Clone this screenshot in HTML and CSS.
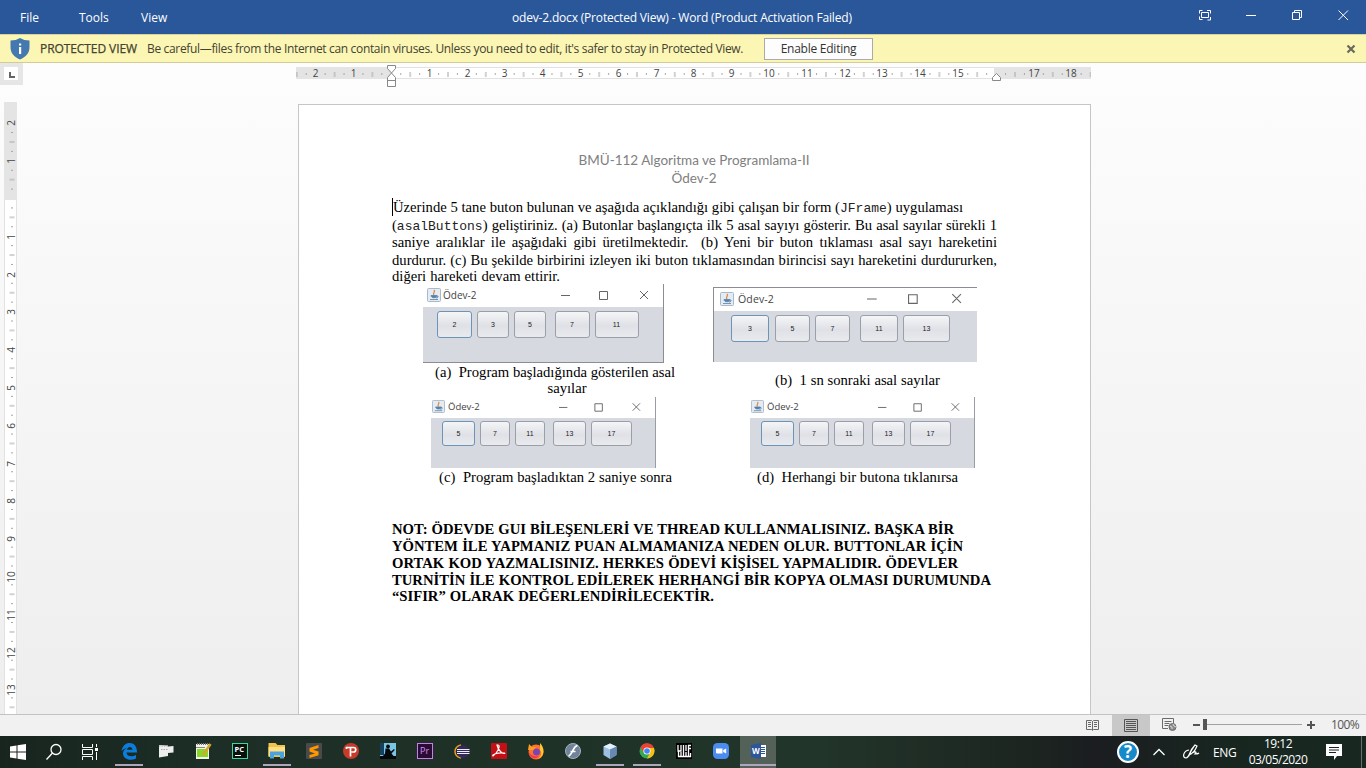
FILE: index.html
```html
<!DOCTYPE html>
<html lang="tr">
<head>
<meta charset="utf-8">
<title>odev-2.docx - Word</title>
<link rel="stylesheet" href="styles.css">
</head>
<body>
<header class="titlebar">
  <nav class="menu"><span class="m-file">File</span><span class="m-tools">Tools</span><span class="m-view">View</span></nav>
  <div class="title">odev-2.docx (Protected View) - Word (Product Activation Failed)</div>
  <svg class="winctl" width="160" height="34" fill="none" stroke="#fff">
    <path d="M3.500 13.500v-3h3M11 10.500h3.500v3M14.500 17v3h-3M6.500 19.500h-3v-3M5.500 12.500h7v5h-7z"/>
    <path d="M50 15.500h10M96.500 12.500h7v7h-7zM98.500 12v-1.500h7v7h-1.500M142.500 10.500l9.500 9.500M152 10.500l-9.500 9.500"/>
  </svg>
</header>
<section class="protect">
  <svg class="shield" width="20" height="22" viewBox="0 0 20 22"><path d="M10 0Q14 2.500 19.500 2.500V9C19.500 15 16 19 10 21.500C4 19 .5 15 .5 9V2.500Q6 2.500 10 0Z" fill="#4478b0"/><path d="M9 9h2.200v7H9zM9 5.500h2.200v2H9z" fill="#fff"/></svg>
  <span class="pv">PROTECTED VIEW</span>
  <span class="careful">Be careful—files from the Internet can contain viruses. Unless you need to edit, it's safer to stay in Protected View.</span>
  <span class="enable">Enable Editing</span>
  <svg class="dismiss" width="10" height="10" viewBox="0 0 10 10"><path d="M1.500 1.500l7 7M8.500 1.500l-7 7" stroke="#6b685c" stroke-width="2.200"/></svg>
</section>
<main class="work">
  <aside class="side">
    <div class="tabstop"><svg width="14" height="13"><rect width="14" height="13" fill="#fff"/><path d="M6 5v5h5" fill="none" stroke="#666" stroke-width="2"/></svg></div>
    <svg class="vruler" width="14" height="613">
      <defs><pattern id="vt" patternUnits="userSpaceOnUse" x="0" y="96.500" width="14" height="37.690"><path d="M7 9.400h2M7 28.200h2M5.500 18.850h5" stroke="#a5a5a5"/></pattern></defs>
      <rect width="13" height="613" fill="#fff"/><path d="M.5 0v613M12.500 0v613" stroke="#e2e2e2"/><rect width="13" height="98" fill="#e4e4e4"/>
      <rect y="25" width="14" height="588" fill="url(#vt)"/>
      <g class="rnum">
        <text transform="translate(11 21) rotate(-90)">2</text><text transform="translate(11 59) rotate(-90)">1</text>
        <text transform="translate(11 135) rotate(-90)">1</text><text transform="translate(11 173) rotate(-90)">2</text><text transform="translate(11 210) rotate(-90)">3</text><text transform="translate(11 248) rotate(-90)">4</text><text transform="translate(11 286) rotate(-90)">5</text><text transform="translate(11 324) rotate(-90)">6</text><text transform="translate(11 362) rotate(-90)">7</text><text transform="translate(11 399) rotate(-90)">8</text><text transform="translate(11 437) rotate(-90)">9</text><text transform="translate(11 475) rotate(-90)">10</text><text transform="translate(11 513) rotate(-90)">11</text><text transform="translate(11 551) rotate(-90)">12</text><text transform="translate(11 588) rotate(-90)">13</text>
      </g>
    </svg>
  </aside>
  <div class="column">
    <svg class="hruler" width="796" height="26">
      <defs><pattern id="ht" patternUnits="userSpaceOnUse" x="95.300" y="0" width="37.800" height="26"><path d="M9.500 10v2M28.300 10v2M18.900 9v5" stroke="#a5a5a5"/></pattern></defs>
      <rect y="4" width="795" height="12" fill="#e4e4e4"/><rect x="95" y="4" width="603" height="12" fill="#fff"/><path d="M95 4.500h603M95 15.500h603" stroke="#e2e2e2"/>
      <rect width="795" height="26" fill="url(#ht)"/>
      <g class="rnum"><text x="19.500" y="14">2</text><text x="57.500" y="14">1</text><text x="133.500" y="14">1</text><text x="171.500" y="14">2</text><text x="208.500" y="14">3</text><text x="246.500" y="14">4</text><text x="284.500" y="14">5</text><text x="322.500" y="14">6</text><text x="360.500" y="14">7</text><text x="397.500" y="14">8</text><text x="435.500" y="14">9</text><text x="473" y="14">10</text><text x="511" y="14">11</text><text x="549" y="14">12</text><text x="586" y="14">13</text><text x="624" y="14">14</text><text x="662" y="14">15</text><text x="738" y="14">17</text><text x="775" y="14">18</text></g>
      <path d="M91.500 2.500h8v3l-4 4.500l4 4.500v9h-8v-9l4-4.500l-4-4.500zM91.500 17.500h8" fill="#fff" stroke="#888"/>
      <path d="M696.500 17.500v-3l4-4l4 4v3z" fill="#fff" stroke="#888"/>
    </svg>
    <article class="page">
      <div class="head"><div>BMÜ-112 Algoritma ve Programlama-II</div><div>Ödev-2</div></div>
      <div class="para">
        <div class="ln l1">Üzerinde 5 tane buton bulunan ve aşağıda açıklandığı gibi çalışan bir form (<code>JFrame</code>) uygulaması</div>
        <div class="ln l2">(<code>asalButtons</code>) geliştiriniz. (a) Butonlar başlangıçta ilk 5 asal sayıyı gösterir. Bu asal sayılar sürekli 1</div>
        <div class="ln">saniye aralıklar ile aşağıdaki gibi üretilmektedir. &nbsp;(b) Yeni bir buton tıklaması asal sayı hareketini</div>
        <div class="ln l4">durdurur. (c) Bu şekilde birbirini izleyen iki buton tıklamasından birincisi sayı hareketini durdururken,</div>
        <div class="ln l5">diğeri hareketi devam ettirir.</div>
      </div>
      <div class="figs">
        <div class="cell c1">
          <div class="jwin wa"><div class="jt"><svg class="java" viewBox="0 0 14 14"><use href="#cup"/></svg><span>Ödev-2</span><svg class="jc" viewBox="0 0 88 10"><use href="#jctl"/></svg></div><div class="jb"><b>2</b><b>3</b><b>5</b><b>7</b><b>11</b></div></div>
          <div class="cap capa"><div class="w240">(a)&nbsp; Program başladığında gösterilen asal</div><div class="second">sayılar</div></div>
        </div>
        <div class="cell c2">
          <div class="jwin wb"><div class="jt"><svg class="java" viewBox="0 0 14 14"><use href="#cup"/></svg><span>Ödev-2</span><svg class="jc" viewBox="0 0 88 10"><use href="#jctl"/></svg></div><div class="jb"><b>3</b><b>5</b><b>7</b><b>11</b><b>13</b></div></div>
          <div class="cap capb">(b)&nbsp; 1 sn sonraki asal sayılar</div>
        </div>
        <div class="cell c3">
          <div class="jwin wc"><div class="jt"><svg class="java" viewBox="0 0 14 14"><use href="#cup"/></svg><span>Ödev-2</span><svg class="jc" viewBox="0 0 88 10"><use href="#jctl"/></svg></div><div class="jb"><b>5</b><b>7</b><b>11</b><b>13</b><b>17</b></div></div>
          <div class="cap capc">(c)&nbsp; Program başladıktan 2 saniye sonra</div>
        </div>
        <div class="cell c4">
          <div class="jwin wc"><div class="jt"><svg class="java" viewBox="0 0 14 14"><use href="#cup"/></svg><span>Ödev-2</span><svg class="jc" viewBox="0 0 88 10"><use href="#jctl"/></svg></div><div class="jb"><b>5</b><b>7</b><b>11</b><b>13</b><b>17</b></div></div>
          <div class="cap capd">(d)&nbsp; Herhangi bir butona tıklanırsa</div>
        </div>
      </div>
      <div class="note">
        <div class="n1">NOT: ÖDEVDE GUI BİLEŞENLERİ VE THREAD KULLANMALISINIZ. BAŞKA BİR</div>
        <div class="n2">YÖNTEM İLE YAPMANIZ PUAN ALMAMANIZA NEDEN OLUR. BUTTONLAR İÇİN</div>
        <div class="n3">ORTAK KOD YAZMALISINIZ. HERKES ÖDEVİ KİŞİSEL YAPMALIDIR. ÖDEVLER</div>
        <div class="n4">TURNİTİN İLE KONTROL EDİLEREK HERHANGİ BİR KOPYA OLMASI DURUMUNDA</div>
        <div class="n5">“SIFIR” OLARAK DEĞERLENDİRİLECEKTİR.</div>
      </div>
    </article>
  </div>
</main>
<footer class="status">
  <svg class="v1" width="14" height="12" fill="none" stroke="#6a6a6a"><path d="M.5 1.500h5l1 1l1-1h5v9h-5l-1 1l-1-1h-5zM6.500 2v9M2 3.500h3M2 5.500h3M2 7.500h3M8 3.500h3M8 5.500h3M8 7.500h3"/></svg>
  <div class="v2"><svg width="14" height="13" fill="none" stroke="#555"><path d="M.5.500h13v12H.5zM2 2.500h10M2 4.500h10M2 6.500h10M2 8.500h10M2 10.500h10"/></svg></div>
  <svg class="v3" width="16" height="14" fill="none" stroke="#6a6a6a"><path d="M6 10.500H.5V.500h11v5M2.500 3.500h7M2.500 5.500h5M2.500 7.500h4"/><circle cx="10.500" cy="9" r="3.500" fill="#888"/><path d="M8 8l2 1v2M11 6l1 2l2 1" stroke="#ddd"/></svg>
  <svg class="zoom" width="124" height="14"><path d="M0 7h7M114 7h8M118 3v8" stroke="#555" stroke-width="2"/><path d="M12 6.500h97" stroke="#a0a0a0"/><rect x="10" y="1" width="4" height="11" fill="#555"/></svg>
  <span class="pct">100%</span>
</footer>
<footer class="taskbar">
  <div class="sys"><svg width="18" height="18" viewBox="0 0 18 18" fill="#fff"><path d="M1 3.500l6.500-1v6H1zM8.500 2.300L17 1v7.500H8.500zM1 9.500h6.500v6L1 14.600zM8.500 9.500H17V17l-8.500-1.300z"/></svg></div>
  <div class="sys"><svg width="18" height="18" fill="none" stroke="#fff" stroke-width="1.300"><circle cx="11" cy="6.500" r="5"/><path d="M7.500 10L1.500 16.500"/></svg></div>
  <div class="sys"><svg width="18" height="18" fill="none" stroke="#fff"><path d="M1.500 1v3.500h10V1M1.500 6.500h10v5h-10zM1.500 17v-3.500h10V17M15.500 1v3M15.500 9v8"/><path d="M14 5h3v3h-3z" fill="#fff" stroke="none"/></svg></div>
  <div class="apps">
    <div class="app on"><svg viewBox="0 0 20 20"><path d="M2.500 10C3.500 4.500 7 2 10.500 2C15 2 18 5 18 11.500H7.500C7.800 15.500 13 16.500 17 14v3.500C11 20.500 4 18 4 12.500C4 10 5.500 8 8 7C5.500 7.300 4 8.500 2.500 10ZM8 8.800h5.500C13.300 5 8.500 5 8 8.800Z" fill="#0d7ddc"/></svg></div>
    <div class="app"><svg viewBox="0 0 20 20"><path d="M3 4l9 .5v1l5.500-.5v6.500l-5.500 .5v3L3 16.500z" fill="#eee"/><path d="M3 5h9M5 8.500h7" stroke="#aaa" stroke-dasharray="1.500 1"/></svg></div>
    <div class="app"><svg viewBox="0 0 20 20"><path d="M3 3h13v15H3z" fill="#f1f4e8"/><path d="M4 8h11v8H4z" fill="#8ad52a"/><path d="M4 3h11" stroke="#777" stroke-width="2" stroke-dasharray="1 1"/><path d="M17.500 3L10 14" stroke="#d9a62d" stroke-width="2.500"/><path d="M3 6.500h9" stroke="#888"/></svg></div>
    <div class="app"><svg viewBox="0 0 20 20"><rect x="2.500" y="2.500" width="15" height="15" fill="#07120e" stroke="#43d69b"/><text x="4.500" y="11" class="pc">PC</text><path d="M5 14.500h6" stroke="#fff"/></svg></div>
    <div class="app on"><svg viewBox="0 0 20 20"><path d="M1.500 2h7l2 2H18v12H1.500z" fill="#f3c24c"/><path d="M1.500 6H18v9H1.500z" fill="#ffdf83"/><path d="M3 17.500V10.500h14v7h-4v-3H7v3z" fill="#4ca3dc"/></svg></div>
    <div class="app"><svg viewBox="0 0 20 20"><rect x="2" y="2" width="16" height="16" rx="1" fill="#4a4a4a"/><path d="M14.500 4v3L9 8.800l5.500 1.700v3.700L5.500 17v-3l5.500-1.600l-5.500-1.800V7z" fill="#ff9800"/></svg></div>
    <div class="app"><svg viewBox="0 0 20 20"><circle cx="10" cy="10" r="8" fill="#c83b2b"/><path d="M5.500 8V6.500h7c3 0 3 4.500 0 4.500H10.500M9.500 6.500V15.500" fill="none" stroke="#fff" stroke-width="1.700"/></svg></div>
    <div class="app"><svg viewBox="0 0 20 20"><rect x="2" y="2" width="16" height="16" fill="#7cc4e4"/><path d="M2 2h4v12H2z" fill="#14425e"/><path d="M2 15h16v3H2z" fill="#05090c"/><circle cx="10" cy="5.500" r="1.900" fill="#05090c"/><path d="M7.500 7.500h3.500l2 3l3-2.500l.8 1l-3.300 3.500l2.500 3H4.500l2.500-3z" fill="#05090c"/></svg></div>
    <div class="app"><svg viewBox="0 0 20 20"><rect x="2.500" y="2.500" width="15" height="15" fill="#2b0b36" stroke="#c77dea"/><text x="5" y="13" class="pr">Pr</text></svg></div>
    <div class="app"><svg viewBox="0 0 20 20"><path d="M9 4C1 6 1 15 9 17" fill="none" stroke="#e99a2e" stroke-width="1.500"/><circle cx="11" cy="10.500" r="6.300" fill="#33285f"/><path d="M5 8.500h12.500M5 10.500h12.500M5 12.500h12.500" stroke="#eee"/></svg></div>
    <div class="app"><svg viewBox="0 0 20 20"><rect x="2" y="2" width="16" height="16" rx="1" fill="#c40f14"/><path d="M9 4c3 0-.5 8-5 11c-1.500-1 4-4 11.500-3c2 1-5 1.500-7.500-8z" fill="none" stroke="#fff" stroke-width="1.200"/></svg></div>
    <div class="app"><svg viewBox="0 0 20 20"><circle cx="10" cy="11" r="7.500" fill="#ff7327"/><path d="M14 2c5 5 5 13-2 16c4-3 4-7 2-9z" fill="#ffc832"/><path d="M2 9l1-6l3 3h4L8 9z" fill="#ff9a24"/><circle cx="10.500" cy="11" r="3.500" fill="#7944b8"/><path d="M3 11c2 4 6 5 10 4c-4 5-10 1-10-4z" fill="#fd3151"/></svg></div>
    <div class="app"><svg viewBox="0 0 20 20"><circle cx="10" cy="10" r="7.500" fill="#70839a" stroke="#a5b0bd"/><path d="M14.500 5c-4-1-5 9-9 10M7.500 10.500h5" fill="none" stroke="#fff" stroke-width="1.700"/></svg></div>
    <div class="app on"><svg viewBox="0 0 20 20"><path d="M10 2.500l6.500 3v8.500L10 18l-6.500-4V5.500z" fill="#9dbfe0"/><path d="M10 2.500l6.500 3L10 8.500l-6.500-3z" fill="#e4f0fa"/><path d="M10 8.500l6.500-3V14L10 18z" fill="#658ab4"/></svg></div>
    <div class="app on"><svg viewBox="0 0 20 20"><circle cx="10" cy="10" r="7.500" fill="#35a854"/><path d="M3.500 6.200A7.500 7.500 0 0 1 17 7H10L7 12z" fill="#e94335"/><path d="M10 17.500L13.500 11L11 7h6C19 12 15 17.500 10 17.500z" fill="#fbbf12"/><circle cx="10" cy="10" r="3.600" fill="#fff"/><circle cx="10" cy="10" r="2.800" fill="#4285f4"/></svg></div>
    <div class="app"><svg viewBox="0 0 20 20"><path d="M2 2h16v16H2z" fill="#000"/><path d="M4 4v6h3V4M9.500 10V4M12 4v6M14 4.500h3M14 7.500h3M14.500 4v6M4.500 10v6M7 11v5M9.500 10v6M12 11v5M14.500 10v6M16.500 12v4M4 15.500h13" fill="none" stroke="#fff" stroke-width="1.300"/></svg></div>
    <div class="app"><svg viewBox="0 0 20 20"><rect x="2" y="2" width="16" height="16" rx="4.500" fill="#4a8cf0"/><path d="M5 7.500h6.500v5H6q-1 0-1-1zM12.200 9l3-1.500v5l-3-1.500z" fill="#fff"/></svg></div>
    <div class="app on word"><svg viewBox="0 0 20 20"><path d="M10 4h7v12h-7z" fill="#fff"/><path d="M12 6.500h4M12 8.500h4M12 10.500h4M12 12.500h4" stroke="#2b579a"/><path d="M2 4l10-2v16L2 16z" fill="#2b579a"/><text x="3" y="13" class="wd">W</text></svg></div>
  </div>
  <svg class="help" width="22" height="22" viewBox="0 0 22 22"><circle cx="11" cy="11" r="10" fill="#1689ca" stroke="#fff" stroke-width="2"/><text x="11" y="17" class="q">?</text></svg>
  <svg class="chev" width="14" height="8" fill="none" stroke="#fff" stroke-width="1.300"><path d="M1.500 7l5.500-5.500L12.500 7"/></svg>
  <svg class="pen" width="18" height="16" fill="none" stroke="#fff" stroke-width="1.200"><path d="M7 6C1 7 0 14 4 14c4 0 2-6 9-13l2 1c-2 5-5 8-8 9M13 1c-3 4-5 8-6 11M10 9c4-2 5-1 3 1c2 0 3 0 4-1"/></svg>
  <span class="eng">ENG</span>
  <div class="clock"><div>19:12</div><div class="date">03/05/2020</div></div>
  <svg class="notif" width="18" height="18"><path d="M1 1h16v12h-5l-3 4v-4H1z" fill="#fff"/><path d="M4 4.500h10M4 7h10M4 9.500h7" stroke="#17241e"/></svg>
  <div class="peek"></div>
</footer>
<svg width="0" height="0" class="defs"><defs>
  <g id="cup"><rect x=".5" y=".5" width="13" height="13" rx="1" fill="#e4ebf2" stroke="#a9b9c9"/><path d="M7 2c2 2-2 3 0 5" fill="none" stroke="#e0873a" stroke-width="1.300"/><path d="M4 7.500h6c0 3-6 3-6 0zM3 11.500h8" fill="#5580a8" stroke="#5580a8" stroke-width=".8"/><path d="M10 8c2 0 1 2-1 2" fill="none" stroke="#5580a8"/></g>
  <g id="jctl" fill="none" stroke="#666"><path d="M0 5.500h9M38.500 1.500h8v8h-8zM79 1l8 8M87 1l-8 8"/></g>
</defs></svg>
</body>
</html>
```
FILE: styles.css
```css
* { box-sizing: border-box; }
body { margin: 0; width: 1366px; height: 768px; overflow: hidden; display: flex; flex-direction: column; background: #fff; font-family: "Open Sans", "Noto Sans", sans-serif; font-size: 12px; }
svg { display: block; flex: none; }
.defs { position: absolute; }
span, .title { white-space: nowrap; }

.titlebar { height: 34px; flex: none; background: #2a579a; color: #fff; display: grid; grid-template-columns: 512px 1fr 170px; line-height: 35px; }
.menu { display: flex; padding-left: 20px; }
.m-file { width: 59px; }
.m-tools { width: 62px; }
.title { font-size: 12px; letter-spacing: -.18px; }
.protect { height: 29px; flex: none; background: #fcf6b5; border-top: 1px solid #d8d2a0; border-bottom: 1px solid #d2cc98; color: #444230; display: flex; align-items: center; padding-left: 10px; }
.shield { margin-right: 10px; }
.pv { width: 107px; letter-spacing: -.08px; -webkit-text-stroke: .25px #444230; }
.careful { width: 617px; letter-spacing: -.335px; }
.enable { width: 109px; height: 22px; border: 1px solid #ababab; background: #fdfdfd; text-align: center; line-height: 20px; color: #333; letter-spacing: -.25px; }
.dismiss { margin-left: 473px; }

.work { height: 651px; flex: none; display: flex; background: linear-gradient(#fdfdfd, #eeeeee); overflow: hidden; }
.side { width: 296px; flex: none; }
.tabstop { width: 23px; height: 22px; background: #e6e6e6; padding: 4px; }
.vruler { margin: 17px 0 0 4px; }
.rnum { font: 10px "Open Sans", sans-serif; fill: #444; text-anchor: middle; }
.hruler { height: 26px; }
.page { margin: 15px 0 0 2px; width: 793px; height: 620px; background: #fff; border: 1px solid #c6c6c6; padding: 46px 94px 0 93px; font-family: "Liberation Serif", serif; font-size: 14.67px; color: #000; }
.head { text-align: center; font: 13.5px/18px Lato, sans-serif; color: #808080; height: 47px; }
.para { width: 605px; height: 86px; }
.ln { line-height: 18px; height: 17.500px; white-space: nowrap; text-align-last: justify; }
.l1 { width: 571px; border-left: 1px solid #000; }
.l2 { letter-spacing: -.04px; }
.l4 { height: 16.500px; }
.l5 { width: 168px; }
code { font: 13px/10px "Liberation Mono", monospace; letter-spacing: 0; color: #222; }

.figs { display: grid; grid-template-columns: 321px 284px; grid-template-rows: 113px 92px; height: 205px; }
.c1 { padding-left: 31px; }
.c2 { padding-top: 3px; }
.c3 { padding-left: 39px; }
.c4 { padding-left: 37px; }
.cap { white-space: nowrap; line-height: 18px; }
.cap, .w240 { text-align-last: justify; }
.capa { width: 240px; margin-left: 12px; }
.second { text-align-last: center; height: 16px; line-height: 17px; margin-top: -1px; padding-left: 24px; }
.capb { width: 165px; margin: 9px 0 0 62px; }
.capc { width: 233px; margin-left: 8px; }
.capd { width: 201px; margin-left: 7px; }

.jwin { background: #fff; font-family: "Open Sans", sans-serif; }
.jt { display: flex; align-items: center; font-size: 10px; color: #444; }
.java { width: 14px; height: 14px; }
.jb { display: flex; background: #d6d9e0; }
.jb b { border: 1px solid #9a9fa8; border-radius: 3px; background: linear-gradient(#f4f5f7, #dfe1e6 55%, #e8eaee); font: 7px/26px "Liberation Sans", sans-serif; color: #222; text-align: center; margin-right: 5px; height: 27px; flex: none; }
.jb b:first-child { border: 1.500px solid #6c93b8; }
.jb b:nth-child(3) { margin-right: 8.500px; }
.wa { width: 241px; height: 79px; border-right: 1px solid #8a8d93; border-bottom: 1px solid #8a8d93; }
.wa .jt { height: 23px; padding: 0 14px 2px 4px; }
.jt span { margin-left: 2px; }
.jc { width: 88px; height: 10px; margin-left: auto; }
.wa .jb { height: 55px; padding: 4px 0 0 14px; }
.wa b { width: 32px; }
.wa b:first-child, .wa b:nth-child(4) { width: 35px; }
.wa b:last-child { width: 44px; }
.wb { width: 264px; height: 75px; border-top: 1px solid #8a8d93; border-left: 1px solid #8a8d93; }
.wb .jt { height: 23px; padding: 0 15px 2px 6px; font-size: 10.500px; }
.wb span { margin-left: 4px; letter-spacing: .15px; }
.wb .jc { width: 95px; height: 11px; }
.wb .jb { height: 51px; padding: 4px 0 0 17px; }
.wb b { width: 35px; }
.wb b:first-child, .wb b:nth-child(4) { width: 38px; }
.wb b:first-child { margin-right: 6px; }
.wb b:nth-child(3) { margin-right: 10px; }
.wb b:last-child { width: 47px; }
.wc { width: 225px; height: 71px; border-right: 1px solid #999ca2; }
.wc .jt { height: 21px; padding: 0 14px 2px 1px; font-size: 9.500px; }
.wc span { margin-left: 3px; }
.wc .java { width: 13px; height: 13px; }
.wc .jc { width: 82px; height: 10px; }
.wc .jb { height: 50px; padding: 3px 0 0 11px; }
.wc b { width: 30px; height: 25px; line-height: 24px; }
.wc b:nth-child(3) { margin-right: 8px; }
.wc b:first-child, .wc b:nth-child(4) { width: 33px; }
.wc b:last-child { width: 41px; }

.note { font-weight: bold; line-height: 17px; margin-top: 32px; white-space: nowrap; text-align-last: justify; }
.note div { height: 16.850px; }
.n1 { width: 562px; }
.n2 { width: 571px; }
.n3 { width: 566px; }
.n4 { width: 599px; }
.n5 { width: 322px; }

.status { height: 22px; flex: none; border-top: 1px solid #c3c3c3; background: #f1f1f1; display: flex; align-items: center; padding: 0 0 2px 1086px; color: #555; }
.v2 { width: 38px; height: 21px; margin: 1px 12px 0 12px; background: #c8c8c8; padding: 4px 12px; }
.zoom { margin-left: 15px; }
.pct { margin-left: 14px; letter-spacing: -.6px; }

.taskbar { height: 32px; flex: none; display: flex; align-items: center; background: linear-gradient(90deg, #18251f, #1c2e25 15%, #22352a 60%, #1c2420 76%, #1b1d20 80%, #182620 90%, #182820); color: #fff; }
.sys { width: 36px; display: flex; justify-content: center; }
.apps { display: flex; height: 32px; margin-left: 2px; }
.app { width: 37px; height: 32px; padding: 5px 8.500px; position: relative; }
.app svg { width: 20px; height: 20px; }
.on::after { content: ""; position: absolute; left: 5px; bottom: 2px; width: 28px; height: 2px; background: #b0a5bd; }
.word { background: #536159; width: 36px; margin-left: 1px; }
.word::after { left: 0; width: 36px; }
.pc { font: bold 7.500px "Open Sans", sans-serif; fill: #fff; }
.pr { font: 9px "Open Sans", sans-serif; fill: #d490f0; }
.wd { font: bold 8px "Open Sans", sans-serif; fill: #fff; }
.help { margin-left: 341px; }
.q { font: bold 17px "Open Sans", sans-serif; fill: #fff; text-anchor: middle; }
.chev { margin-left: 13px; }
.pen { margin-left: 16px; }
.eng { margin-left: 13px; width: 33px; letter-spacing: -.4px; }
.clock { width: 64px; text-align: center; line-height: 16px; letter-spacing: -.5px; }
.notif { margin-left: 15px; }
.peek { width: 1px; height: 32px; background: #66716b; margin-left: auto; margin-right: 4px; }
```
